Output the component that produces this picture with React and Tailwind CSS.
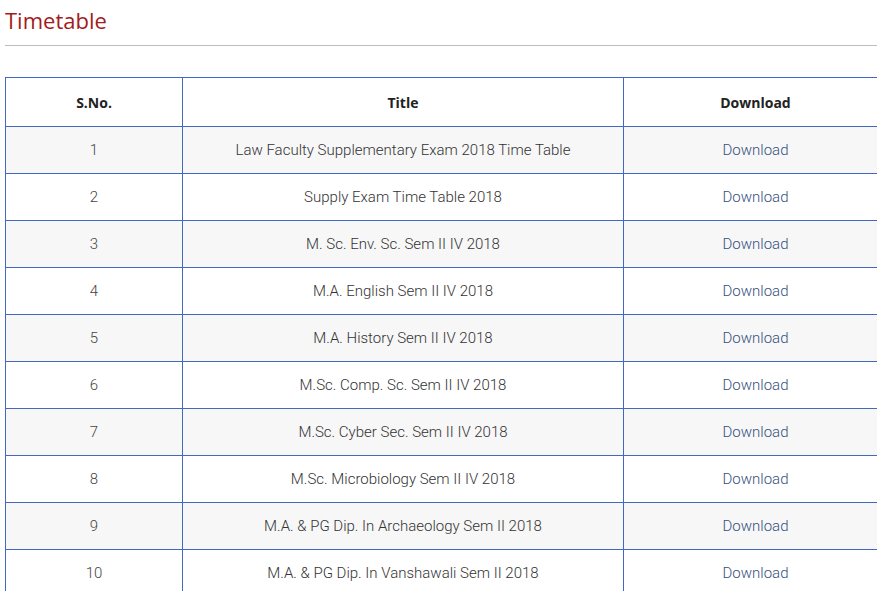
import React from "react";

const rows = [
  "Law Faculty Supplementary Exam 2018 Time Table",
  "Supply Exam Time Table 2018",
  "M. Sc. Env. Sc. Sem II IV 2018",
  "M.A. English Sem II IV 2018",
  "M.A. History Sem II IV 2018",
  "M.Sc. Comp. Sc. Sem II IV 2018",
  "M.Sc. Cyber Sec. Sem II IV 2018",
  "M.Sc. Microbiology Sem II IV 2018",
  "M.A. & PG Dip. In Archaeology Sem II 2018",
  "M.A. & PG Dip. In Vanshawali Sem II 2018",
];

const App = () => {
  return (
    <div className="w-[877px] h-[591px] overflow-hidden bg-white">
      <div className="pl-[5px] w-[900px]">
        {/* Heading */}
        <h2 className="text-[22px] leading-[40px] text-[#a31b1b] font-['Open_Sans',sans-serif] font-normal">
          Timetable
        </h2>
        <div className="w-[872px] border-t border-[#bdbdbd] mt-[5px]"></div>

        {/* Table */}
        <table className="mt-[31px] w-[882px] border-collapse table-fixed font-['Roboto',sans-serif]">
          <colgroup>
            <col className="w-[177px]" />
            <col className="w-[441px]" />
            <col className="w-[264px]" />
          </colgroup>
          <thead>
            <tr className="h-[49px] bg-white">
              <th className="border border-[#4169c4] text-[14px] font-bold text-[#222] font-['Open_Sans',sans-serif]">S.No.</th>
              <th className="border border-[#4169c4] text-[14px] font-bold text-[#222] font-['Open_Sans',sans-serif]">Title</th>
              <th className="border border-[#4169c4] text-[14px] font-bold text-[#222] font-['Open_Sans',sans-serif]">Download</th>
            </tr>
          </thead>
          <tbody>
            {rows.map((title, i) => (
              <tr key={i} className={`h-[47px] ${i % 2 === 0 ? "bg-[#f7f7f7]" : "bg-white"}`}>
                <td className="border border-[#4169c4] text-center text-[15px] font-light text-[#444]">{i + 1}</td>
                <td className="border border-[#4169c4] text-center text-[15px] font-light text-[#333]">{title}</td>
                <td className="border border-[#4169c4] text-center text-[15px] font-light">
                  <a href="#" className="text-[#35507e]">Download</a>
                </td>
              </tr>
            ))}
          </tbody>
        </table>
      </div>
    </div>
  );
};

export default App;
